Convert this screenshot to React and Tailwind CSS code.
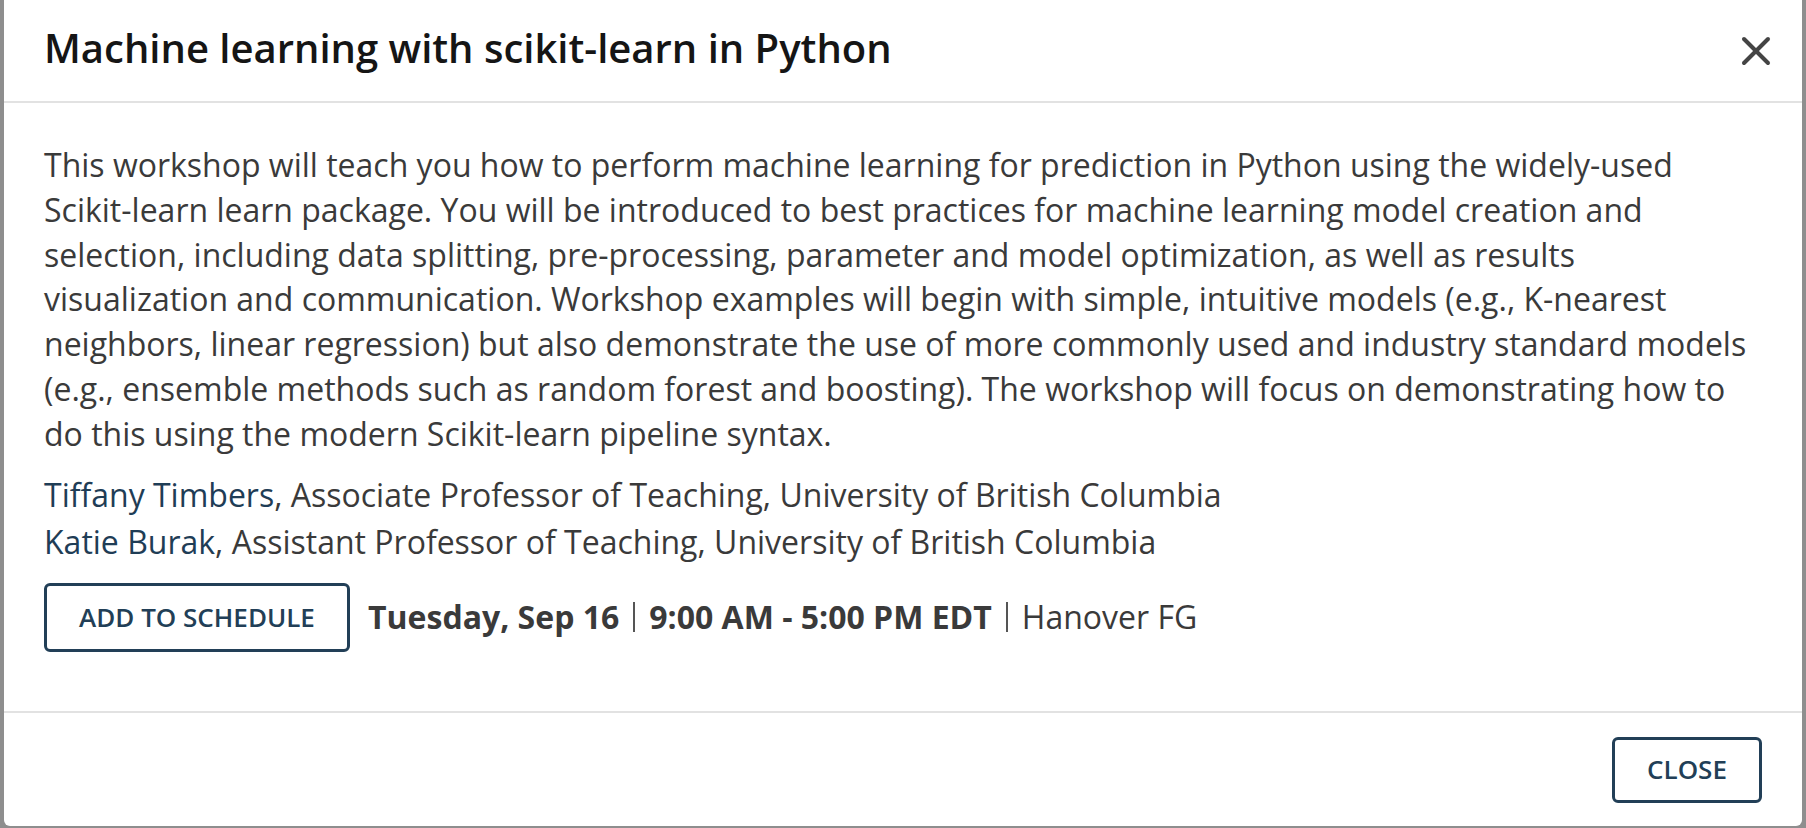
import { X } from 'lucide-react'

const speakers = [
  { name: 'Tiffany Timbers', title: 'Associate Professor of Teaching, University of British Columbia' },
  { name: 'Katie Burak', title: 'Assistant Professor of Teaching, University of British Columbia' },
]

function App() {
  return (
    <div className="h-[828px] overflow-hidden bg-[#8e8e8e] px-[4px] font-['Open_Sans',sans-serif]">
      <div className="flex h-[826px] flex-col rounded-b-[6px] bg-white">
        {/* Header */}
        <header className="flex h-[103px] shrink-0 items-center justify-between border-b-2 border-[#e2e2e2] pl-[40px] pr-[22px]">
          <h1 className="-mt-[6px] text-[40px] font-semibold text-[#151515]">Machine learning with scikit-learn in Python</h1>
          <button className="text-[#444]">
            <X size={48} strokeWidth={2} />
          </button>
        </header>

        {/* Body */}
        <main className="flex-1 px-[40px] pt-[40px] text-[32px] text-[#3a3a3a]">
          <p className="leading-[1.4]">
            This workshop will teach you how to perform machine learning for prediction in Python using the widely-used
            <br />
            Scikit-learn learn package. You will be introduced to best practices for machine learning model creation and
            <br />
            selection, including data splitting, pre-processing, parameter and model optimization, as well as results
            <br />
            visualization and communication. Workshop examples will begin with simple, intuitive models (e.g., K-nearest
            <br />
            neighbors, linear regression) but also demonstrate the use of more commonly used and industry standard models
            <br />
            (e.g., ensemble methods such as random forest and boosting). The workshop will focus on demonstrating how to
            <br />
            do this using the modern Scikit-learn pipeline syntax.
          </p>

          <div className="mt-[14px]">
            {speakers.map((s) => (
              <div key={s.name} className="leading-[47px]">
                <span className="text-[#1f3d56]">{s.name}</span>, {s.title}
              </div>
            ))}
          </div>

          <div className="mt-[18px] flex items-center">
            <button className="flex h-[69px] w-[306px] items-center justify-center rounded-[6px] border-[3px] border-[#223f57] text-[26px] font-semibold text-[#223f57]">
              ADD TO SCHEDULE
            </button>
            <div className="ml-[18px] flex items-center text-[32px] text-[#3a3a3a]">
              <span className="font-bold">Tuesday, Sep 16</span>
              <span className="mx-[14px] h-[30px] w-[2px] bg-[#555]" />
              <span className="font-bold">9:00 AM - 5:00 PM EDT</span>
              <span className="mx-[14px] h-[30px] w-[2px] bg-[#555]" />
              <span>Hanover FG</span>
            </div>
          </div>
        </main>

        {/* Footer */}
        <footer className="flex h-[115px] shrink-0 items-center justify-end border-t-2 border-[#e2e2e2] pr-[40px]">
          <button className="flex h-[66px] w-[150px] items-center justify-center rounded-[6px] border-[3px] border-[#223f57] text-[26px] font-semibold text-[#223f57]">
            CLOSE
          </button>
        </footer>
      </div>
    </div>
  )
}

export default App
